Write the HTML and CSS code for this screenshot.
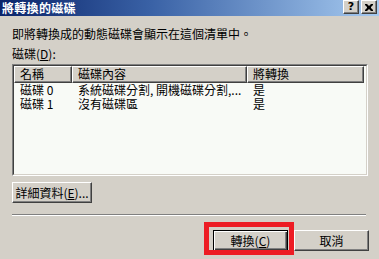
FILE: index.html
```html
<!DOCTYPE html>
<html>
<head>
<meta charset="utf-8">
<link rel="stylesheet" href="styles.css">
</head>
<body>
<div class="dialog">
  <div class="titlebar">
    <span class="title">將轉換的磁碟</span>
    <div class="tbtns">
      <span class="tbtn help">?</span>
      <span class="tbtn close"><svg width="8" height="7" viewBox="0 0 8 7"><path d="M0 0h2l2 2 2-2h2v1l-2 2v1l2 2v1h-2l-2-2-2 2h-2v-1l2-2v-1l-2-2z" fill="#000"/></svg></span>
    </div>
  </div>
  <div class="body">
    <div class="intro">即將轉換成的動態磁碟會顯示在這個清單中。</div>
    <div class="label">磁碟(<u>D</u>):</div>
    <div class="list">
      <div class="list-inner">
        <div class="hdr">
          <div class="hcell c1">名稱</div>
          <div class="hcell c2">磁碟內容</div>
          <div class="hcell c3">將轉換</div>
        </div>
        <div class="row">
          <div class="cell c1">磁碟 0</div>
          <div class="cell c2">系統磁碟分割, 開機磁碟分割,...</div>
          <div class="cell c3">是</div>
        </div>
        <div class="row">
          <div class="cell c1">磁碟 1</div>
          <div class="cell c2">沒有磁碟區</div>
          <div class="cell c3">是</div>
        </div>
      </div>
    </div>
    <div class="details-row">
      <button class="btn details">詳細資料(<u>E</u>)...</button>
    </div>
    <div class="sep"></div>
    <div class="actions">
      <div class="highlight">
        <button class="btn default">轉換(<u>C</u>)</button>
      </div>
      <button class="btn">取消</button>
    </div>
  </div>
</div>
</body>
</html>
```
FILE: styles.css
```css
* { box-sizing: border-box; }
html, body { margin: 0; padding: 0; }
body {
  width: 379px;
  height: 259px;
  overflow: hidden;
  background: #d4d0c8;
  font-family: "Noto Sans CJK TC", "Liberation Sans", sans-serif;
  font-size: 12px;
  line-height: 13px;
  color: #000;
}
.dialog { width: 379px; height: 259px; }
.titlebar {
  height: 16px;
  background: linear-gradient(to right, #0a246a 0%, #3a62a6 40%, #a6caf0 100%);
  display: flex;
  justify-content: space-between;
  align-items: flex-start;
  padding: 0 2px 0 2px;
}
.title {
  color: #fff;
  font-weight: bold;
  font-size: 12px;
  line-height: 16px;
  letter-spacing: 0.3px;
}
.tbtns { display: flex; gap: 2px; }
.tbtn {
  width: 16px;
  height: 14px;
  background: #d4d0c8;
  border: 1px solid;
  border-color: #fff #404040 #404040 #fff;
  box-shadow: inset -1px -1px #808080;
  display: flex;
  align-items: center;
  justify-content: center;
  font-family: "DejaVu Sans", sans-serif;
  font-weight: bold;
  font-size: 11px;
  line-height: 12px;
}
.body { padding: 0 10px 0 12px; }
.intro { margin-top: 11px; height: 13px; white-space: nowrap; }
.label { margin-top: 7px; height: 13px; }
.label u, .btn u { text-decoration: underline; text-underline-offset: 1px; }
.list {
  margin-top: 4px;
  width: 356px;
  height: 112px;
  border: 1px solid;
  border-color: #808080 #fff #fff #808080;
}
.list-inner {
  height: 100%;
  border: 1px solid;
  border-color: #404040 #d4d0c8 #d4d0c8 #404040;
  background: #f8faf6;
  padding-right: 2px;
}
.hdr { display: flex; height: 17px; }
.hcell {
  background: #d4d0c8;
  border: 1px solid;
  border-color: #fff #404040 #404040 #fff;
  box-shadow: inset -1px -1px #808080;
  padding-left: 5px;
  line-height: 14px;
  white-space: nowrap;
}
.c1 { width: 58px; }
.c2 { width: 175px; }
.c3 { width: 117px; }
.row { display: flex; height: 14px; line-height: 14px; white-space: nowrap; }
.cell { padding-left: 6px; }
.row .c1 { width: 58px; }
.row .c2 { width: 175px; }
.details-row { margin-top: 6px; }
.btn {
  font: inherit;
  line-height: 13px;
  background: #d4d0c8;
  color: #000;
  height: 21px;
  width: 75px;
  padding: 0;
  border: 1px solid;
  border-color: #fff #404040 #404040 #fff;
  box-shadow: inset -1px -1px #808080;
  display: inline-flex;
  align-items: center;
  justify-content: center;
}
.details { width: 80px; }
.sep {
  margin-top: 11px;
  width: 354px;
  height: 2px;
  border-top: 1px solid #808080;
  border-bottom: 1px solid #fff;
}
.actions {
  margin-top: 14px;
  display: flex;
  justify-content: flex-end;
  gap: 6px;
}
.highlight { position: relative; }
.highlight::after {
  content: "";
  position: absolute;
  left: -9px;
  top: -8px;
  right: -6px;
  bottom: -4px;
  border: 5px solid #ed1c24;
  pointer-events: none;
}
.btn.default {
  border: 1px solid #000;
  box-shadow: inset 1px 1px #fff, inset -1px -1px #404040, inset -2px -2px #808080;
}
```
